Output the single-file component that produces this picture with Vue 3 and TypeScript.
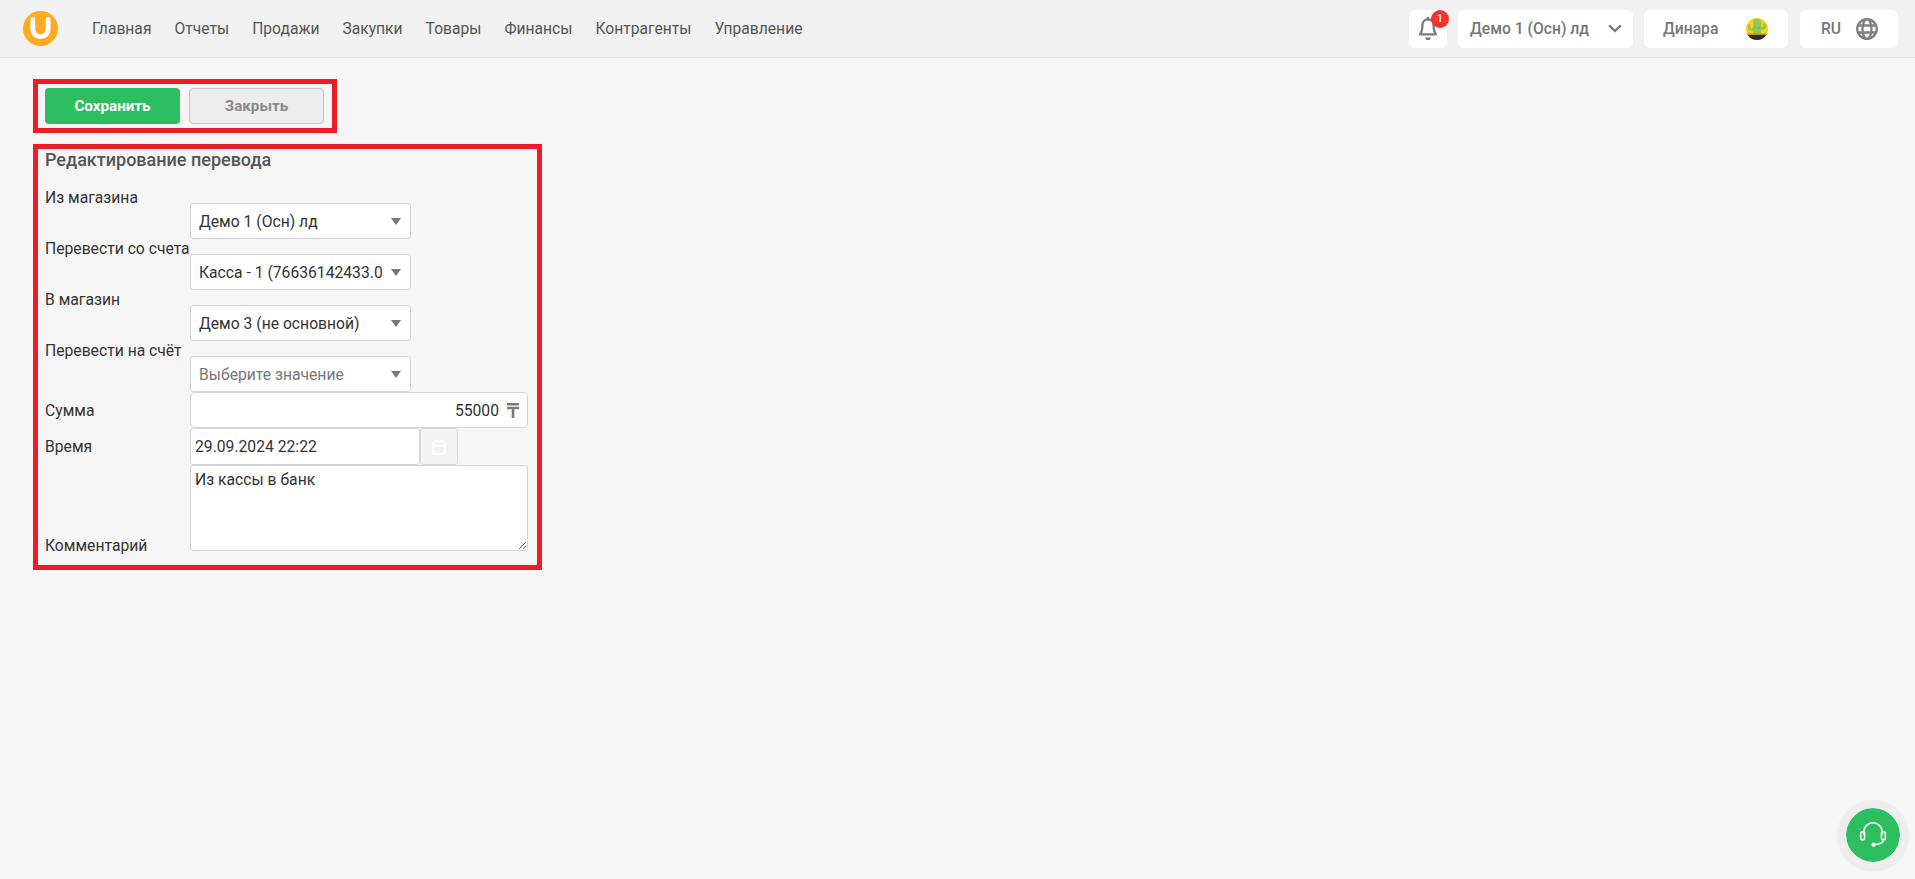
<script setup lang="ts">
const navItems = ['Главная', 'Отчеты', 'Продажи', 'Закупки', 'Товары', 'Финансы', 'Контрагенты', 'Управление']

interface SelectRow {
  label: string
  value: string
  placeholder?: boolean
}

const selectRows: SelectRow[] = [
  { label: 'Из магазина', value: 'Демо 1 (Осн) лд' },
  { label: 'Перевести со счета', value: 'Касса - 1 (76636142433.0' },
  { label: 'В магазин', value: 'Демо 3 (не основной)' },
  { label: 'Перевести на счёт', value: 'Выберите значение', placeholder: true },
]
</script>

<template>
  <div class="page">
    <header class="topbar">
      <svg class="logo" viewBox="0 0 35 35" width="35" height="35">
        <circle cx="17.5" cy="17.5" r="17.5" fill="#fdab20" />
        <path d="M9.800 8.500v9.500a7.700 7.700 0 0 0 15.400 0V8.500" fill="none" stroke="#fff" stroke-width="4.800" stroke-linecap="round" />
      </svg>
      <nav class="nav">
        <a v-for="item in navItems" :key="item" class="nav-item">{{ item }}</a>
      </nav>
      <div class="top-right">
        <div class="chip bell-chip">
          <svg class="bell" viewBox="0 0 18 24" width="18" height="24">
            <path d="M9 2.400c-3.600 0-5.600 2.700-5.600 6.200 0 4.400-.8 6.800-2.400 8.800h16c-1.600-2-2.400-4.400-2.400-8.800 0-3.500-2-6.200-5.600-6.200z" fill="none" stroke="#7a7a7a" stroke-width="2.300" stroke-linejoin="round" />
            <path d="M9 .8v2" stroke="#7a7a7a" stroke-width="2.300" stroke-linecap="round" />
            <path d="M6.300 20.400h5.400a2.700 2.700 0 0 1-5.400 0z" fill="#7a7a7a" />
          </svg>
          <span class="badge">1</span>
        </div>
        <div class="chip store-chip">
          <span>Демо 1 (Осн) лд</span>
          <svg viewBox="0 0 14 9" width="14" height="9">
            <path d="M1.200 1.400 7 7l5.800-5.600" fill="none" stroke="#777" stroke-width="2.200" />
          </svg>
        </div>
        <div class="chip user-chip">
          <span>Динара</span>
          <svg viewBox="0 0 22 22" width="22" height="22">
            <defs>
              <clipPath id="avatar-clip"><circle cx="11" cy="11" r="11" /></clipPath>
            </defs>
            <g clip-path="url(#avatar-clip)">
              <rect width="22" height="22" fill="#fdd20e" />
              <path d="M7 16V4.500a4 4 0 0 1 8 0V16z" fill="#8fc85a" />
              <path d="M7 12.500H4.500A2.500 2.500 0 0 1 2 10V6.500h2.500V10H7zM15 11.500h2.500A2.500 2.500 0 0 0 20 9V5.500h-2.500V9H15z" fill="#8fc85a" />
              <circle cx="9" cy="9" r=".6" fill="#4c7a2a" />
              <circle cx="13" cy="10" r=".6" fill="#4c7a2a" />
              <rect y="16.500" width="22" height="6" fill="#2b2b2b" />
              <rect x="2" y="15.500" width="18" height="1.600" fill="#c9803c" />
            </g>
          </svg>
        </div>
        <div class="chip lang-chip">
          <span>RU</span>
          <svg viewBox="0 0 22 22" width="22" height="22" fill="none" stroke="#808080" stroke-width="2.300">
            <circle cx="11" cy="11" r="9.800" />
            <ellipse cx="11" cy="11" rx="4.500" ry="9.800" />
            <path d="M1.500 7.500h19M1.500 14.500h19" />
          </svg>
        </div>
      </div>
    </header>

    <main class="content">
      <div class="marked toolbar">
        <button class="btn btn-save">Сохранить</button>
        <button class="btn btn-close">Закрыть</button>
      </div>

      <section class="marked form">
        <h1 class="form-title">Редактирование перевода</h1>
        <div v-for="row in selectRows" :key="row.label" class="row row-select">
          <label class="label">{{ row.label }}</label>
          <div class="select" :class="{ placeholder: row.placeholder }">
            <span class="select-text">{{ row.value }}</span>
            <i class="caret"></i>
          </div>
        </div>

        <div class="row row-field">
          <label class="label label-sum">Сумма</label>
          <div class="money">
            <input class="money-input" value="55000" />
            <svg viewBox="0 0 12 15" width="12" height="15">
              <path d="M0 1.300h12M0 5h12M6 5v10" fill="none" stroke="#7a7a7a" stroke-width="2.600" />
            </svg>
          </div>
        </div>

        <div class="row row-field">
          <label class="label">Время</label>
          <input class="date-input" value="29.09.2024 22:22" />
          <button class="date-btn">
            <svg viewBox="0 0 14 16" width="14" height="16" fill="none" stroke="#fff" stroke-width="1.800">
              <rect x="1" y="2.500" width="12" height="12.500" rx="2" />
              <path d="M1 6.500h12M4 .5v3M10 .5v3" />
            </svg>
          </button>
        </div>

        <div class="row row-comment">
          <label class="label">Комментарий</label>
          <textarea class="comment">Из кассы в банк</textarea>
        </div>
      </section>
    </main>

    <button class="support">
      <svg viewBox="0 0 28 28" width="30" height="30" fill="none" stroke="#fff" stroke-width="1.500" stroke-linecap="round">
        <path d="M5.500 13V11a8.500 8.500 0 0 1 17 0v2" />
        <rect x="2.500" y="11" width="3.600" height="7.500" rx="1.800" />
        <rect x="21.900" y="11" width="3.600" height="7.500" rx="1.800" />
        <path d="M23.700 18.500c0 2.600-2.500 4.100-7.700 4.300" />
        <circle cx="14.500" cy="23" r="1.200" fill="#fff" />
      </svg>
    </button>
  </div>
</template>

<style>
body {
  margin: 0;
  background: #f6f6f6;
}
</style>

<style scoped>
.page {
  position: relative;
  min-height: 879px;
  overflow: hidden;
  background: #f6f6f6;
  font-family: Roboto, "Liberation Sans", sans-serif;
  font-size: 15.7px;
  color: #333;
}

.topbar {
  display: flex;
  align-items: center;
  box-sizing: border-box;
  height: 58px;
  padding: 0 17px 0 23px;
  background: #f1f1f1;
  border-bottom: 1px solid #e2e2e2;
}

.nav {
  display: flex;
  gap: 23px;
  margin-left: 34px;
}

.nav-item {
  color: #555;
  font-size: 15.65px;
  line-height: 18px;
}

.top-right {
  display: flex;
  gap: 11px;
  margin-left: auto;
}

.chip {
  position: relative;
  display: flex;
  align-items: center;
  box-sizing: border-box;
  height: 38px;
  background: #fff;
  border-radius: 6px;
  color: #777;
  font-weight: 500;
}

.bell-chip {
  width: 38px;
  justify-content: center;
}

.badge {
  position: absolute;
  top: 0;
  right: -2px;
  width: 18px;
  height: 18px;
  border-radius: 50%;
  background: #f5302f;
  color: #fff;
  font-size: 11px;
  line-height: 18px;
  text-align: center;
}

.store-chip {
  width: 175px;
  padding: 0 11px 0 12px;
  justify-content: space-between;
}

.user-chip {
  width: 144px;
  padding: 0 20px 0 19px;
  justify-content: space-between;
}

.lang-chip {
  width: 98px;
  margin-left: 1px;
  padding: 0 20px 0 21px;
  justify-content: space-between;
}

.content {
  padding: 21px 0 0 33px;
}

.marked {
  box-sizing: border-box;
  border: 5px solid #ee1c25;
}

.toolbar {
  display: flex;
  gap: 9px;
  width: 304px;
  padding: 4px 7px;
}

.btn {
  width: 135px;
  height: 36px;
  padding: 0;
  border-radius: 4px;
  font-family: inherit;
  font-size: 15.2px;
  font-weight: 700;
}

.btn-save {
  border: none;
  background: #2dbe60;
  color: #fff;
}

.btn-close {
  border: 1px solid #c4c4c4;
  background: #ededed;
  color: #8a8a8a;
}

.form {
  width: 509px;
  margin-top: 11px;
  padding: 0 9px 14px 7px;
}

.form-title {
  margin: 0;
  height: 39px;
  color: #555;
  font-size: 18px;
  font-weight: 500;
  line-height: 22px;
}

.row {
  display: flex;
}

.label {
  flex: 0 0 145px;
  line-height: 18px;
  white-space: nowrap;
}

.label-sum {
  padding-top: 2px;
}

.row-select {
  height: 51px;
  align-items: flex-start;
}

.row-select .label {
  margin-top: 1px;
}

.select {
  display: flex;
  align-items: center;
  justify-content: space-between;
  box-sizing: border-box;
  width: 221px;
  height: 36px;
  margin-top: 15px;
  padding: 0 8px;
  background: #fff;
  border: 1px solid #d1d5db;
  border-radius: 3px;
}

.select-text {
  white-space: nowrap;
}

.placeholder {
  color: #777;
}

.caret {
  flex: none;
  width: 0;
  height: 0;
  margin-right: 1px;
  border-left: 5px solid transparent;
  border-right: 5px solid transparent;
  border-top: 7px solid #777;
}

.row-field {
  align-items: center;
}

.money {
  display: flex;
  align-items: center;
  justify-content: flex-end;
  gap: 8px;
  box-sizing: border-box;
  width: 338px;
  height: 36px;
  padding: 0 8px 0 4px;
  background: #fff;
  border: 1px solid #d1d5db;
  border-radius: 5px;
}

.money-input {
  flex: 1;
  min-width: 0;
  padding: 0;
  border: none;
  outline: none;
  background: none;
  font: inherit;
  color: inherit;
  text-align: right;
}

.date-input {
  box-sizing: border-box;
  width: 230px;
  height: 37px;
  padding: 0 4px;
  background: #fff;
  border: 1px solid #d1d5db;
  border-radius: 3px;
  outline: none;
  font: inherit;
  color: inherit;
}

.date-btn {
  display: flex;
  align-items: center;
  justify-content: center;
  width: 38px;
  height: 37px;
  padding: 0;
  background: #f3f3f3;
  border: 1px solid #d8dade;
  border-radius: 3px;
}

.row-comment {
  align-items: flex-end;
}

.row-comment .label {
  margin-bottom: -4px;
}

.comment {
  display: block;
  box-sizing: border-box;
  width: 338px;
  height: 86px;
  padding: 4px 4px;
  background: #fff;
  border: 1px solid #d1d5db;
  border-radius: 3px;
  outline: none;
  font: inherit;
  color: inherit;
}

.support {
  position: absolute;
  left: 1838px;
  top: 800px;
  display: flex;
  align-items: center;
  justify-content: center;
  box-sizing: border-box;
  width: 70px;
  height: 70px;
  padding: 0;
  background: #2dbe60;
  background-clip: padding-box;
  border: 8px solid #eeeeee;
  border-radius: 50%;
  box-shadow: 0 1px 3px rgba(0, 0, 0, 0.08);
}
</style>
